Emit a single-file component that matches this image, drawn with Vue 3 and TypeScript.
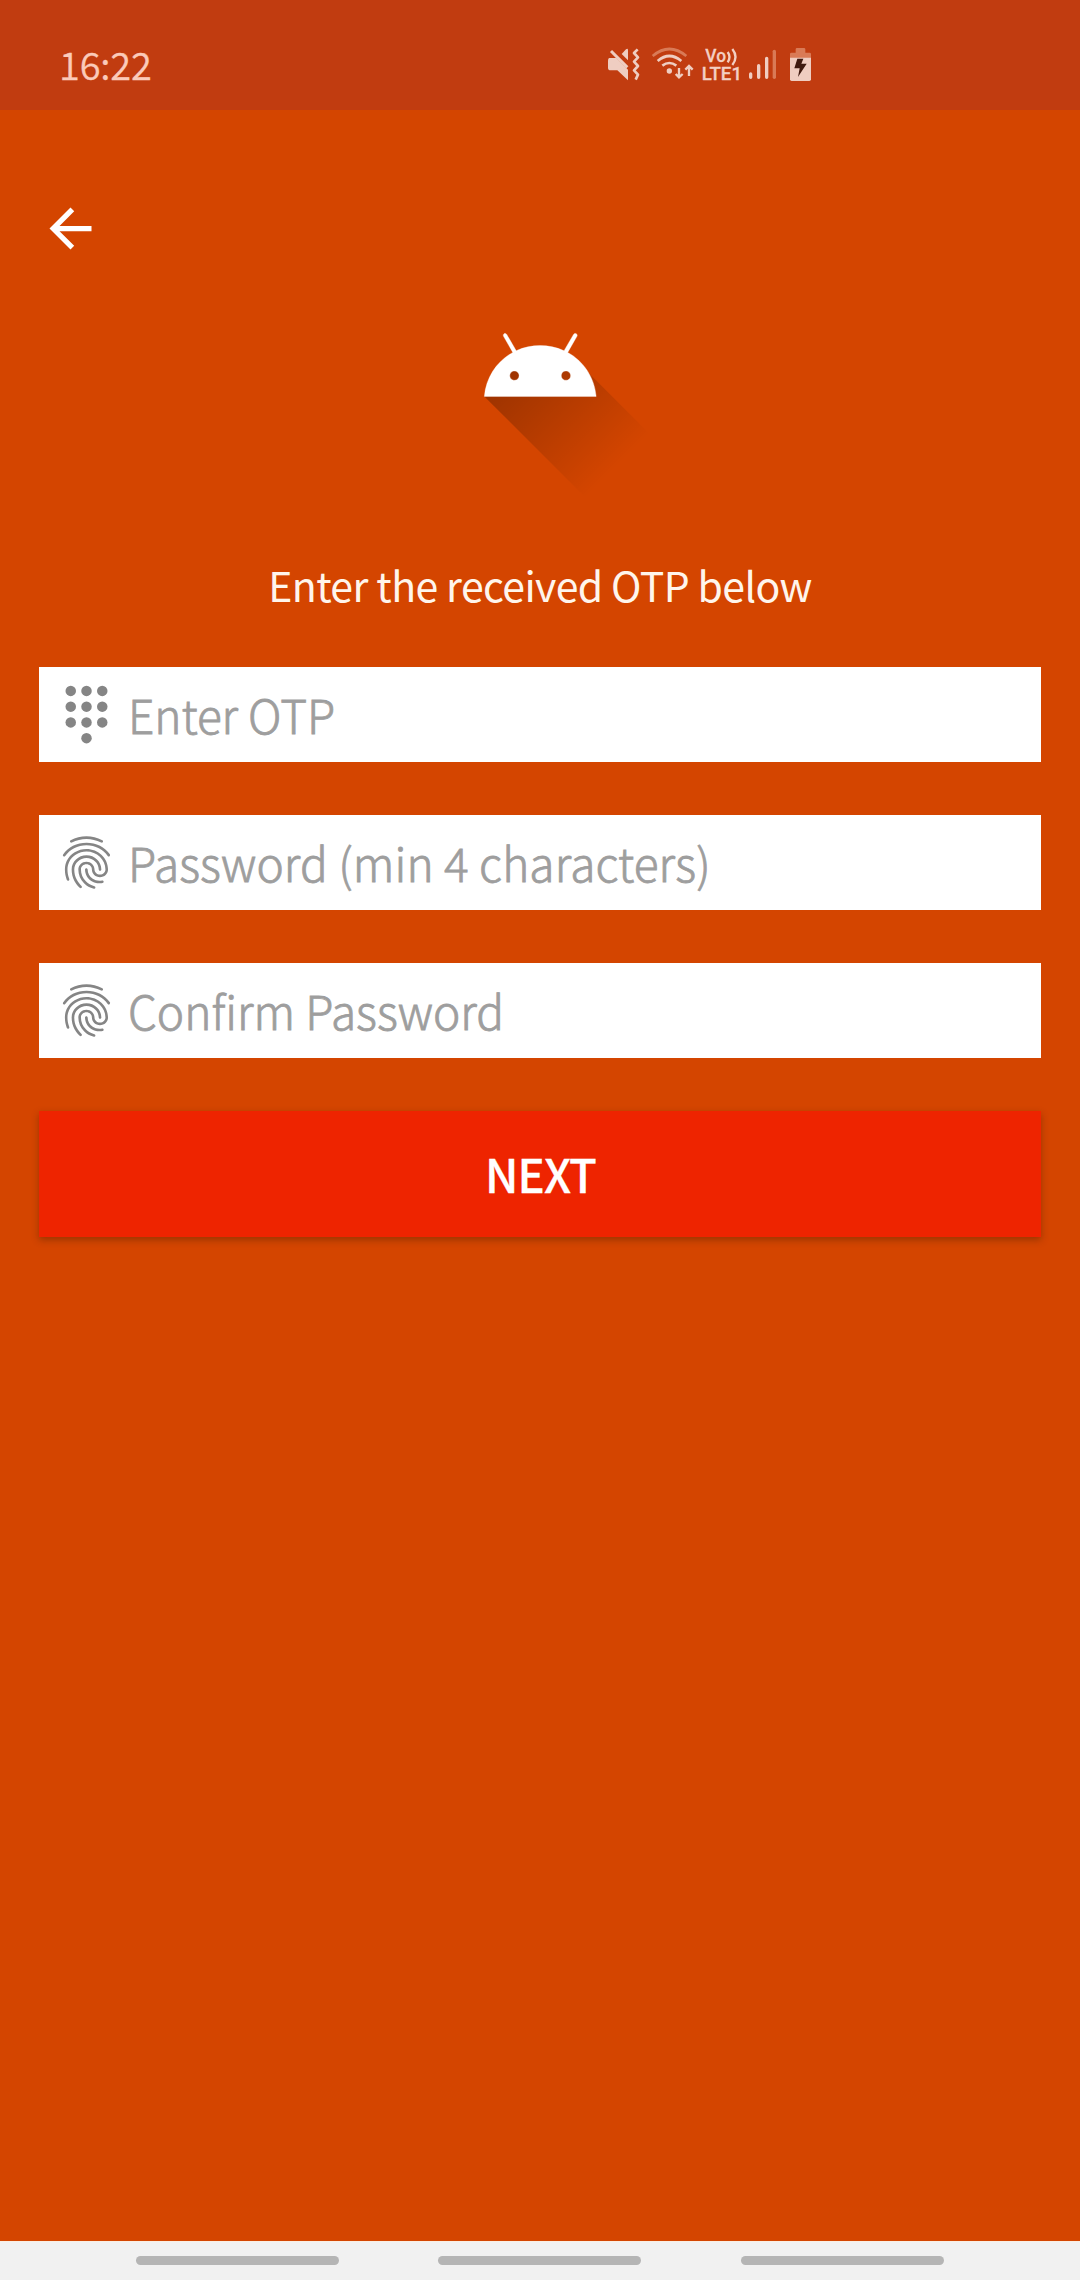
<script setup lang="ts">
interface Field {
  id: string
  label: string
  icon: 'dialpad' | 'fingerprint'
}

const fields: Field[] = [
  { id: 'otp', label: 'Enter OTP', icon: 'dialpad' },
  { id: 'password', label: 'Password (min 4 characters)', icon: 'fingerprint' },
  { id: 'confirm', label: 'Confirm Password', icon: 'fingerprint' },
]

const dots: [number, number][] = [
  [6, 3], [12, 3], [18, 3],
  [6, 9], [12, 9], [18, 9],
  [6, 15], [12, 15], [18, 15],
  [12, 21],
]
</script>

<template>
  <div class="screen">
    <header class="status">
      <span class="time">16:22</span>
      <svg class="indicators" viewBox="0 0 720 270" fill="none">
        <!-- muted, vibrating -->
        <g fill="#efcdc1">
          <path d="M58 84H79L114 119V151L82 121H62Q54 121 54 113V92Q54 84 58 84Z" />
          <path d="M95 72L108 58Q114 54 114 61V91Z" />
        </g>
        <path d="M63 63L112 112" stroke="#efcdc1" stroke-width="9" />
        <path d="M143 58L132 69L144 82L132 95L144 108L132 121L144 134L137 149" stroke="#efcdc1" stroke-width="8" stroke-linejoin="round" />
        <!-- wifi -->
        <path d="M188 78Q238 36 289 78" stroke="#d97a56" stroke-width="8" />
        <g stroke="#efcdc1" stroke-width="8">
          <path d="M203 93Q238 63 274 93" />
          <path d="M217 107Q238 91 259 107" />
          <path d="M267 114V141M257 132L267 142L278 132" stroke-width="7" />
          <path d="M297 138V110M286 119L297 108L308 119" stroke-width="7" />
        </g>
        <circle cx="238" cy="123" r="8" fill="#efcdc1" />
        <!-- network type -->
        <g class="network" fill="#f3cfc3">
          <text x="346" y="96" textLength="62" lengthAdjust="spacingAndGlyphs">Vo</text>
          <text x="335" y="150" textLength="121" lengthAdjust="spacingAndGlyphs">LTE1</text>
        </g>
        <path d="M413 66Q424 81 413 97M427 57Q446 81 427 105" stroke="#f3cfc3" stroke-width="7" />
        <!-- signal -->
        <g stroke-width="10" stroke-linecap="round">
          <path d="M482 132V142M506 107V142M530 85V142" stroke="#f0cdc1" />
          <path d="M553 64V142" stroke="#d97a56" />
        </g>
        <!-- battery -->
        <path d="M600 84V72Q600 68 604 68H617V58Q617 54 621 54H642Q646 54 646 58V68H659Q663 68 663 72V84Z" fill="#d97a56" />
        <path d="M600 83H663V148Q663 153 658 153H605Q600 153 600 148Z" fill="#efcdc1" />
        <path d="M622 86H640L634 101H650L624 141L629 115H613Z" fill="#3f1a10" />
      </svg>
    </header>

    <main class="content">
      <svg class="back" viewBox="0 0 24 24" fill="#fff">
        <path d="M20 11H7.83l5.59-5.59L12 4l-8 8 8 8 1.41-1.41L7.83 13H20v-2z" />
      </svg>

      <svg class="logo" viewBox="0 0 108 108">
        <defs>
          <linearGradient id="shade" gradientUnits="userSpaceOnUse" x1="42.9492" y1="49.59793" x2="85.84757" y2="92.4963">
            <stop offset="0" stop-color="#000" stop-opacity=".267" />
            <stop offset="1" stop-color="#000" stop-opacity="0" />
          </linearGradient>
        </defs>
        <path fill="url(#shade)" d="M31 63.928c0 0 6.4-11 12.1-13.1c7.2-2.6 26-1.4 26-1.4l38.1 38.1L107 108.928l-32-1L31 63.928z" />
        <path fill="#fff" stroke="#fff" stroke-width=".15" d="M65.3 45.828l3.8-6.6c.2-.4.1-.9-.3-1.1c-.4-.2-.9-.1-1.1.3l-3.9 6.7c-6.3-2.8-13.4-2.8-19.7 0l-3.9-6.7c-.2-.4-.7-.5-1.1-.3C38.8 38.328 38.7 38.828 38.9 39.228l3.8 6.6C36.2 49.428 31.7 56.028 31 63.928h46C76.3 56.028 71.8 49.428 65.3 45.828zM43.4 57.328c-.8 0-1.5-.5-1.8-1.2c-.3-.7-.1-1.5.4-2.1c.5-.5 1.4-.7 2.1-.4c.7.3 1.2 1 1.2 1.8C45.3 56.528 44.5 57.328 43.4 57.328zM64.6 57.328c-.8 0-1.5-.5-1.8-1.2s-.1-1.5.4-2.1c.5-.5 1.4-.7 2.1-.4c.7.3 1.2 1 1.2 1.8C66.5 56.528 65.6 57.328 64.6 57.328z" />
      </svg>

      <p class="prompt">Enter the received OTP below</p>

      <div class="form">
        <div v-for="field in fields" :key="field.id" class="field">
          <svg class="icon" viewBox="0 0 24 24" fill="#858585">
            <template v-if="field.icon === 'dialpad'">
              <circle v-for="(dot, i) in dots" :key="i" :cx="dot[0]" :cy="dot[1]" r="2" />
            </template>
            <path
              v-else
              d="M17.81 4.47c-.08 0-.16-.02-.23-.06C15.66 3.42 14 3 12.01 3c-1.98 0-3.86.47-5.57 1.41-.24.13-.54.04-.68-.2-.13-.24-.04-.55.2-.68C7.82 2.52 9.86 2 12.01 2c2.13 0 3.99.47 6.03 1.52.25.13.34.43.21.67-.09.18-.26.28-.44.28zM3.5 9.72c-.1 0-.2-.03-.29-.09-.23-.16-.28-.47-.12-.7.99-1.4 2.25-2.5 3.75-3.27C9.98 4.04 14 4.03 17.15 5.65c1.5.77 2.76 1.86 3.75 3.25.16.22.11.54-.12.7-.23.16-.54.11-.7-.12-.9-1.26-2.04-2.25-3.39-2.94-2.87-1.47-6.54-1.47-9.4.01-1.36.7-2.5 1.7-3.4 2.96-.08.14-.23.21-.39.21zm6.25 12.07c-.13 0-.26-.05-.35-.15-.87-.87-1.34-1.43-2.01-2.64-.69-1.23-1.05-2.73-1.05-4.34 0-2.97 2.54-5.39 5.66-5.39s5.66 2.42 5.66 5.39c0 .28-.22.5-.5.5s-.5-.22-.5-.5c0-2.42-2.09-4.39-4.66-4.39-2.57 0-4.66 1.97-4.66 4.39 0 1.44.32 2.77.93 3.85.64 1.15 1.08 1.64 1.85 2.42.19.2.19.51 0 .71-.11.1-.24.15-.37.15zm7.17-1.85c-1.19 0-2.24-.3-3.1-.89-1.49-1.01-2.38-2.65-2.38-4.39 0-.28.22-.5.5-.5s.5.22.5.5c0 1.41.72 2.74 1.94 3.56.71.48 1.54.71 2.54.71.24 0 .64-.03 1.04-.1.27-.05.53.13.58.41.05.27-.13.53-.41.58-.57.11-1.07.12-1.21.12zM14.91 22c-.04 0-.09-.01-.13-.02-1.59-.44-2.63-1.03-3.72-2.1-1.4-1.39-2.17-3.24-2.17-5.22 0-1.62 1.38-2.94 3.08-2.94 1.7 0 3.08 1.32 3.08 2.94 0 1.07.93 1.94 2.08 1.94s2.08-.87 2.08-1.94c0-3.77-3.25-6.83-7.25-6.83-2.84 0-5.44 1.58-6.61 4.03-.39.81-.59 1.76-.59 2.8 0 .78.07 2.01.67 3.61.1.26-.03.55-.29.64-.26.1-.55-.04-.64-.29-.49-1.31-.73-2.61-.73-3.96 0-1.2.23-2.29.68-3.24 1.33-2.79 4.28-4.6 7.51-4.6 4.55 0 8.25 3.51 8.25 7.83 0 1.62-1.38 2.94-3.08 2.94s-3.08-1.32-3.08-2.94c0-1.07-.93-1.94-2.08-1.94s-2.08.87-2.08 1.94c0 1.71.66 3.31 1.87 4.51.95.94 1.86 1.46 3.27 1.85.27.07.42.35.35.61-.05.23-.26.38-.47.38z"
            />
          </svg>
          <span class="hint" :class="field.id">{{ field.label }}</span>
        </div>
        <button class="next" type="button">NEXT</button>
      </div>
    </main>

    <nav class="navbar">
      <span v-for="n in 3" :key="n" class="pill" />
    </nav>
  </div>
</template>

<style>
body {
  margin: 0;
}
</style>

<style scoped>
.screen {
  display: flex;
  flex-direction: column;
  width: 1080px;
  height: 2280px;
  overflow: hidden;
  background: #d44500;
  font-family: "Noto Sans CJK SC", "Noto Sans", sans-serif;
}

.status {
  display: flex;
  align-items: flex-start;
  justify-content: space-between;
  height: 110px;
  padding: 0 250px 0 59px;
  box-sizing: border-box;
  background: #c13c10;
}

.time {
  margin-top: 34px;
  font-size: 38px;
  line-height: 60px;
  letter-spacing: -0.2px;
  font-weight: 350;
  color: #fbcab9;
  -webkit-text-stroke: 0.3px #fbcab9;
}

.indicators {
  display: block;
  width: 240px;
  height: 90px;
  margin-top: 30px;
}

.network {
  font-family: Roboto, sans-serif;
  font-size: 53px;
  font-weight: 500;
  stroke: #f3cfc3;
  stroke-width: 0.8px;
}

.content {
  display: flex;
  flex: 1;
  flex-direction: column;
  padding: 87px 39px 0;
}

.back {
  display: block;
  width: 63px;
  height: 63px;
}

.logo {
  display: block;
  align-self: center;
  width: 262.5px;
  height: 262.5px;
  margin-top: -18.7px;
}

.prompt {
  margin: 50px 0 0;
  font-size: 41px;
  line-height: 60px;
  letter-spacing: -0.62px;
  text-align: center;
  white-space: nowrap;
  color: #fff5ec;
}

.form {
  display: flex;
  flex-direction: column;
  gap: 53px;
  margin-top: 53.2px;
}

.field {
  display: flex;
  align-items: center;
  height: 95px;
  padding-left: 16px;
  background: #fff;
}

.icon {
  display: block;
  width: 63px;
  height: 63px;
}

.hint {
  margin: -2px 0 0 10px;
  font-size: 46px;
  font-weight: 300;
  line-height: 60px;
  white-space: nowrap;
  color: #9e9e9e;
  -webkit-text-stroke: 0.8px #9e9e9e;
}

.hint.otp {
  letter-spacing: -0.1px;
}

.hint.password {
  letter-spacing: 0.12px;
}

.next {
  height: 126px;
  padding: 0 0 3px 1px;
  border: 0;
  background: #ee2400;
  box-shadow: 0 3px 7px rgba(70, 30, 0, 0.4);
  font-family: inherit;
  font-size: 45.5px;
  font-weight: 500;
  line-height: 60px;
  letter-spacing: -0.9px;
  color: #fff;
  -webkit-text-stroke: 0.3px #fff;
}

.navbar {
  display: flex;
  justify-content: center;
  gap: 99.5px;
  height: 39px;
  padding: 15px 1px 0 0;
  box-sizing: border-box;
  background: #f1f1f1;
  box-shadow: inset 0 1px #fbeee2;
}

.pill {
  width: 203px;
  height: 9px;
  border-radius: 4.5px;
  background: #b5b5b5;
}
</style>
